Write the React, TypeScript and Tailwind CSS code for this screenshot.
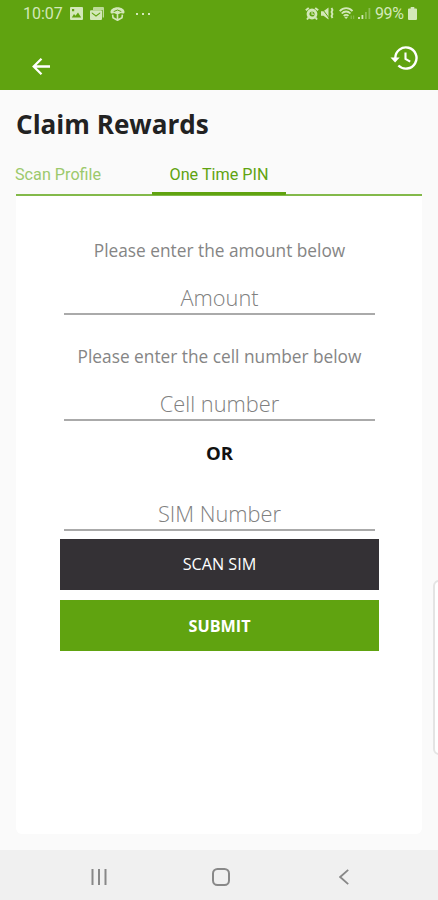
function StatusBar() {
  return (
    <div className="flex h-[27px] items-center justify-between pl-[23px] pr-[21px] font-['Roboto',sans-serif] text-[16px] leading-none text-[#d3e8b9]">
      <div className="flex items-center">
        <span className="w-[39px] whitespace-nowrap">10:07</span>
        <svg className="ml-2 h-[13px] w-[13px]" viewBox="0 0 13 13" fill="currentColor">
          <path fillRule="evenodd" d="M1 0h11a1 1 0 0 1 1 1v11a1 1 0 0 1-1 1H1a1 1 0 0 1-1-1V1a1 1 0 0 1 1-1Zm.8 10.500h9.400L8 5.500l-2.500 3.200L4 7Z M2 2v2.200h2.200V2Z" />
        </svg>
        <svg className="ml-[7px] h-[14px] w-[14px]" viewBox="0 0 14 14" fill="currentColor">
          <path d="M4 0h9a1 1 0 0 1 1 1v9.500h-1.300V3H3V1a1 1 0 0 1 1-1Z" opacity=".8" />
          <path fillRule="evenodd" d="M1 3.200h10a1 1 0 0 1 1 1V12a1 1 0 0 1-1 1H1a1 1 0 0 1-1-1V4.200a1 1 0 0 1 1-1Zm.8 2v1.300L6 9.800 10.200 6.500V5.200L6 8.300Z" />
        </svg>
        <svg className="ml-[6px] h-[14px] w-[15px]" viewBox="0 0 15 14">
          <path d="M7.500.3C3.500.3.5 2.500.5 5c0 1.200.8 1.900 1.900 1.500 1.700-.6 3.200-.3 5.100 1.800 1.900-2.100 3.400-2.400 5.100-1.800 1.100.4 1.900-.3 1.900-1.500C14.500 2.500 11.500.3 7.500.3Z" fill="currentColor" />
          <path d="M2.600 7.700 3 10.700l4.500 2.600 4.500-2.600.4-3M7.500 8v5" fill="none" stroke="currentColor" strokeWidth="1.600" />
          <path d="M3.700 4.600 7.500 3l3.800 1.600" fill="none" stroke="#60a310" strokeWidth="1" />
        </svg>
        <span className="ml-[11px] flex gap-[4px]">
          <i className="h-[2px] w-[2px] bg-[#d3e8b9]" />
          <i className="h-[2px] w-[2px] bg-[#d3e8b9]" />
          <i className="h-[2px] w-[2px] bg-[#d3e8b9]" />
        </span>
      </div>

      <div className="flex items-center">
        <svg className="mr-[2px] h-[13px] w-[14px]" viewBox="0 0 14 13" fill="none" stroke="currentColor">
          <circle cx="7" cy="7" r="4" strokeWidth="2.800" />
          <path d="M.8 3.300 3.800.9M13.200 3.300 10.200.9M3.500 10.500 2 12.500M10.500 10.500l1.500 2" strokeWidth="1.900" />
          <path d="M7 4.500V7.200h2" strokeWidth="1.100" />
        </svg>
        <svg className="h-[13px] w-[13px]" viewBox="0 0 13 13">
          <path d="M0 4.300h2.500L7.500.5v12L2.500 8.700H0Z" fill="currentColor" />
          <path d="M.5 1 8.500 11.500" stroke="#60a310" strokeWidth="1" />
          <path d="m10.500 1 1 2-1 2 1 2-1 2 1 2" fill="none" stroke="currentColor" strokeWidth="1.800" />
        </svg>
        <svg className="ml-[5px] h-[13px] w-[17px]" viewBox="0 0 17 13" fill="none" stroke="currentColor">
          <path d="M.7 4.200C4.500.2 10 .2 13.500 4.200" strokeWidth="1.800" />
          <path d="M2.700 6.500c2.500-2.700 6.300-2.700 8.800 0M4.700 8.900c1.500-1.500 3.400-1.500 4.800 0" strokeWidth="1.800" />
          <path d="M5.700 10 7.100 11.800 8.500 10Z" fill="currentColor" strokeWidth=".5" />
          <path d="M12.200 8.500v3.500M14.700 8.500v3.500" strokeWidth="1" opacity=".4" />
        </svg>
        <svg className="ml-[2px] h-[13px] w-[13px]" viewBox="0 0 13 13" fill="currentColor">
          <path d="M0 10h2v2H0ZM3.500 8h1.800v4H3.500Z" />
          <path d="M7 5h1.800v7H7ZM10.500 1h1.800v11h-1.800Z" opacity=".4" />
        </svg>
        <span className="ml-[4px] w-[29px] whitespace-nowrap tracking-[-0.4px]">99%</span>
        <svg className="ml-[4px] h-[13px] w-[9px]" viewBox="0 0 9 13" fill="currentColor">
          <path d="M2.700 0h3.600v1.600H8a1 1 0 0 1 1 1V12a1 1 0 0 1-1 1H1a1 1 0 0 1-1-1V2.600a1 1 0 0 1 1-1h1.700Z" />
        </svg>
      </div>
    </div>
  );
}

function Field({ label }: { label: string }) {
  return (
    <div className="mx-1 h-[34px] border-b-2 border-[#aaa] text-center text-[21.800px] font-light leading-[33px] text-[#808080]">
      {label}
    </div>
  );
}

export default function App() {
  return (
    <div className="relative flex h-[900px] w-[438px] flex-col overflow-hidden bg-[#fafafa] font-['Open_Sans',sans-serif]">
      <header className="h-[90px] shrink-0 bg-[#60a310]">
        <StatusBar />
        <div className="flex justify-between pl-[32px] pr-[20px] pt-[18px] text-white">
          <svg className="mt-[13px] h-[17px] w-[18px]" viewBox="0 0 18 17" fill="none" stroke="currentColor" strokeWidth="2.300">
            <path d="M18 8.500H2M9.500.8 1.700 8.500l7.800 7.700" />
          </svg>
          <svg className="h-[26px] w-[28px]" viewBox="0 0 28 26" fill="none" stroke="currentColor" strokeWidth="2.400">
            <path d="M5.300 13A10.600 10.600 0 1 1 8.400 20.500" />
            <path d="M15.500 7.500v6.300l4.700 2.800" strokeWidth="2.100" />
            <path d="M.5 12.500h9.200L5.100 17.500Z" fill="currentColor" stroke="none" />
          </svg>
        </div>
      </header>

      <main className="flex flex-1 flex-col px-4">
        <h1 className="mt-[16px] text-[26.100px] font-bold leading-[36px] text-[#222]">Claim Rewards</h1>

        <nav className="mt-[12px] flex h-[42px] border-b-2 border-[#83b94a] font-['Roboto',sans-serif] text-[16.200px] leading-[42px]">
          <span className="-ml-px w-[137px] text-[#9cc96c]">Scan Profile</span>
          <span className="-mb-[1px] h-[41px] w-[134px] rounded-b-[1px] border-b-[3px] border-[#60a310] text-center text-[#60a310]">
            One Time PIN
          </span>
        </nav>

        <section className="h-[638px] rounded-b-md bg-white pl-11 pr-[43px] pt-[42px]">
          <p className="whitespace-nowrap text-center text-[17.300px] leading-[25px] text-[#858585]">Please enter the amount below</p>
          <div className="mt-[18px]">
            <Field label="Amount" />
          </div>
          <p className="mt-[29px] whitespace-nowrap text-center text-[17.300px] leading-[25px] text-[#858585]">
            Please enter the cell number below
          </p>
          <div className="mt-[18px]">
            <Field label="Cell number" />
          </div>
          <p className="mt-[20px] text-center text-[18.600px] font-bold leading-6 text-[#111]">OR</p>
          <div className="mt-[32px]">
            <Field label="SIM Number" />
          </div>
          <button className="mt-[8px] block h-[51px] w-full bg-[#343135] text-[16.200px] text-white">SCAN SIM</button>
          <button className="mt-[10px] block h-[51px] w-full bg-[#60a310] pt-px text-[16.200px] font-bold text-white">SUBMIT</button>
        </section>
      </main>

      {/* Edge panel handle */}
      <div className="absolute -right-2 top-[580px] h-[175px] w-[13px] rounded-[6px] border-2 border-[#e4e4e4] bg-white" />

      <footer className="flex h-[50px] shrink-0 items-center bg-[#f0f0f0] pt-[3px] text-[#888]">
        <svg className="ml-[91px] h-4 w-4" viewBox="0 0 16 16" stroke="currentColor" strokeWidth="2">
          <path d="M1.500 0v16M8 0v16M14.500 0v16" />
        </svg>
        <svg className="ml-[105px] h-[18px] w-[18px]" viewBox="0 0 18 18" fill="none" stroke="currentColor" strokeWidth="2">
          <rect x="1" y="1" width="16" height="16" rx="4.500" />
        </svg>
        <svg className="ml-[109px] h-4 w-[10px]" viewBox="0 0 10 16" fill="none" stroke="currentColor" strokeWidth="1.800">
          <path d="M9.200.8 1.200 8l8 7.200" />
        </svg>
      </footer>
    </div>
  );
}
